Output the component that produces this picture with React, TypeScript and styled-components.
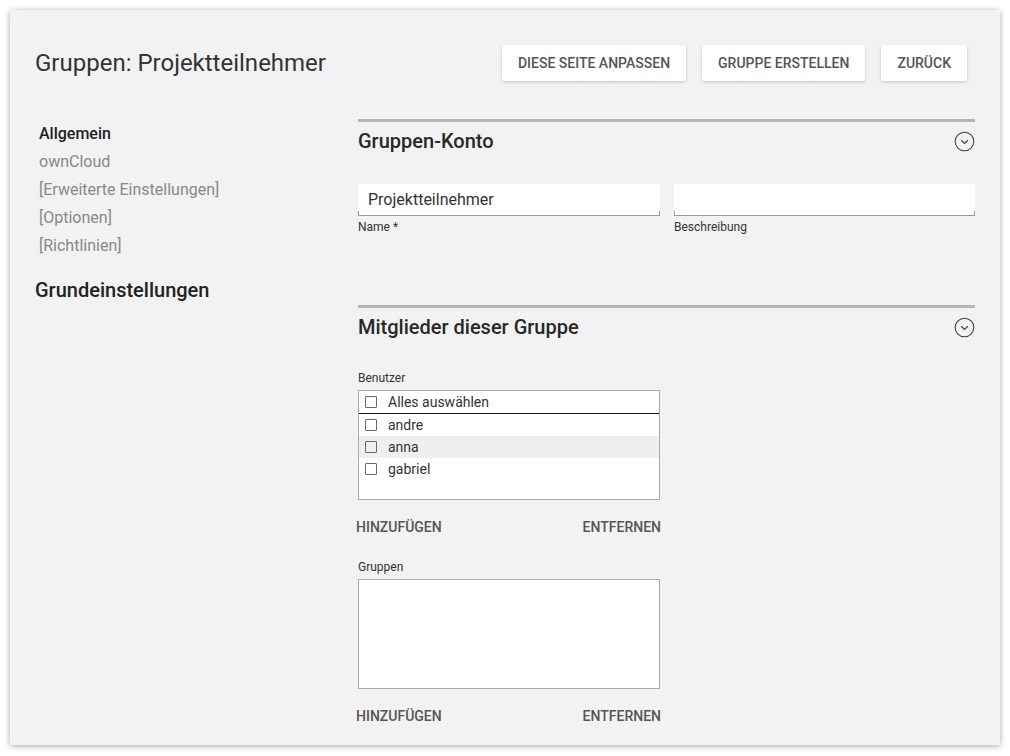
import React from "react";
import styled, { createGlobalStyle } from "styled-components";

const Global = createGlobalStyle`
  html, body { margin: 0; padding: 0; background: #ffffff; }
  body { font-family: Roboto, "Noto Sans", Arial, sans-serif; color: #333; }
  * { box-sizing: border-box; }
`;

const Panel = styled.div`
  margin: 10px;
  width: 990px;
  height: 735px;
  background: #f2f2f2;
  box-shadow: 0 1px 6px rgba(0, 0, 0, 0.35);
  padding: 0 25px 0 25px;
  overflow: hidden;
`;

const Header = styled.header`
  display: flex;
  align-items: center;
  justify-content: space-between;
  height: 109px;
  padding: 35px 8px 38px 0;
`;

const Title = styled.h1`
  margin: 0;
  height: 36px;
  font-size: 24px;
  font-weight: 400;
  color: #333;
  line-height: 35px;
  padding-top: 1px;
`;

const Actions = styled.div`
  display: flex;
  gap: 16px;
`;

const ActionButton = styled.button`
  height: 36px;
  padding: 0 16px;
  border: none;
  border-radius: 2px;
  background: #fff;
  box-shadow: 0 1px 3px rgba(0, 0, 0, 0.2);
  font-family: Roboto, sans-serif;
  font-size: 14px;
  font-weight: 500;
  color: #555;
  text-transform: uppercase;
`;

const Body = styled.div`
  display: grid;
  grid-template-columns: 323px 1fr;
`;

const Nav = styled.nav`
  display: flex;
  flex-direction: column;
  padding-top: 1px;
`;

const NavItem = styled.div<{ $active?: boolean }>`
  padding-left: 4px;
  font-size: 16px;
  line-height: 28px;
  font-weight: ${(p) => (p.$active ? 500 : 400)};
  color: ${(p) => (p.$active ? "#222" : "#888")};
`;

const NavHeading = styled.div`
  margin-top: 16px;
  font-size: 20px;
  line-height: 28px;
  font-weight: 500;
  color: #222;
`;

const Main = styled.div`
  display: flex;
  flex-direction: column;
`;

const Section = styled.section<{ $gap?: number }>`
  border-top: 3px solid #b5b5b5;
  margin-bottom: ${(p) => p.$gap ?? 0}px;
`;

const SectionHead = styled.div`
  height: 38px;
  display: flex;
  align-items: center;
  justify-content: space-between;
`;

const SectionTitle = styled.h2`
  margin: 0;
  font-size: 20px;
  font-weight: 500;
  color: #282828;
  line-height: 24px;
  padding-bottom: 1px;
`;

const FieldRow = styled.div`
  margin-top: 24px;
  display: grid;
  grid-template-columns: 302px 301px;
  gap: 14px;
`;

const Field = styled.div`
  display: flex;
  flex-direction: column;
`;

const InputBox = styled.div`
  position: relative;
  height: 32px;
  background: #fff;
  border-bottom: 1px solid #9a9a9a;
  padding-left: 10px;
  font-size: 16px;
  line-height: 31px;
  color: #333;
  &::before,
  &::after {
    content: "";
    position: absolute;
    bottom: 0;
    width: 1px;
    height: 4px;
    background: #9a9a9a;
  }
  &::before { left: 0; }
  &::after { right: 0; }
`;

const SmallLabel = styled.label<{ $top?: number; $bottom?: number }>`
  display: block;
  margin-top: ${(p) => p.$top ?? 0}px;
  margin-bottom: ${(p) => p.$bottom ?? 0}px;
  font-size: 12px;
  line-height: 14px;
  color: #333;
`;

const Block = styled.div`
  width: 303px;
  margin-top: 25px;
  display: flex;
  flex-direction: column;
`;

const ListBox = styled.div`
  width: 302px;
  height: 110px;
  background: #fff;
  border: 1px solid #ababab;
`;

const Row = styled.div<{ $head?: boolean; $shaded?: boolean }>`
  height: ${(p) => (p.$head ? 23 : 22)}px;
  display: flex;
  align-items: center;
  gap: 11px;
  padding-left: 6px;
  font-size: 14px;
  color: #333;
  background: ${(p) => (p.$shaded ? "#efefef" : "#fff")};
  border-bottom: ${(p) => (p.$head ? "1px solid #111" : "none")};
`;

const Check = styled.span`
  width: 12px;
  height: 12px;
  border: 1.5px solid #6a6a6a;
  border-radius: 1px;
  flex: none;
`;

const ListActions = styled.div<{ $top: number }>`
  margin-top: ${(p) => p.$top}px;
  height: 36px;
  display: flex;
  align-items: center;
  justify-content: space-between;
  margin-left: -2px;
`;

const TextButton = styled.button`
  border: none;
  background: none;
  padding: 0;
  font-family: Roboto, sans-serif;
  font-size: 14px;
  font-weight: 500;
  color: #555;
  text-transform: uppercase;
`;

const ChevronCircle = () => (
  <svg width="21" height="21" viewBox="0 0 21 21" fill="none">
    <circle cx="10.5" cy="10.5" r="9.3" stroke="#444" strokeWidth="1.1" />
    <polyline points="7.2,9.2 10.5,12.4 13.8,9.2" stroke="#444" strokeWidth="1.3" fill="none" />
  </svg>
);

const users = ["andre", "anna", "gabriel"];

export default function App() {
  return (
    <>
      <Global />
      <Panel>
        <Header>
          <Title>Gruppen: Projektteilnehmer</Title>
          <Actions>
            <ActionButton>Diese Seite anpassen</ActionButton>
            <ActionButton>Gruppe erstellen</ActionButton>
            <ActionButton>Zurück</ActionButton>
          </Actions>
        </Header>
        <Body>
          <Nav>
            <NavItem $active>Allgemein</NavItem>
            <NavItem>ownCloud</NavItem>
            <NavItem>[Erweiterte Einstellungen]</NavItem>
            <NavItem>[Optionen]</NavItem>
            <NavItem>[Richtlinien]</NavItem>
            <NavHeading>Grundeinstellungen</NavHeading>
          </Nav>
          <Main>
            <Section $gap={71}>
              <SectionHead>
                <SectionTitle>Gruppen-Konto</SectionTitle>
                <ChevronCircle />
              </SectionHead>
              <FieldRow>
                <Field>
                  <InputBox>Projektteilnehmer</InputBox>
                  <SmallLabel $top={4}>Name *</SmallLabel>
                </Field>
                <Field>
                  <InputBox />
                  <SmallLabel $top={4}>Beschreibung</SmallLabel>
                </Field>
              </FieldRow>
            </Section>
            <Section>
              <SectionHead>
                <SectionTitle>Mitglieder dieser Gruppe</SectionTitle>
                <ChevronCircle />
              </SectionHead>
              <Block>
                <SmallLabel $bottom={5}>Benutzer</SmallLabel>
                <ListBox>
                  <Row $head>
                    <Check />
                    Alles auswählen
                  </Row>
                  {users.map((u, i) => (
                    <Row key={u} $shaded={i === 1}>
                      <Check />
                      {u}
                    </Row>
                  ))}
                </ListBox>
                <ListActions $top={9}>
                  <TextButton>Hinzufügen</TextButton>
                  <TextButton>Entfernen</TextButton>
                </ListActions>
                <SmallLabel $top={15} $bottom={5}>
                  Gruppen
                </SmallLabel>
                <ListBox />
                <ListActions $top={9}>
                  <TextButton>Hinzufügen</TextButton>
                  <TextButton>Entfernen</TextButton>
                </ListActions>
              </Block>
            </Section>
          </Main>
        </Body>
      </Panel>
    </>
  );
}
